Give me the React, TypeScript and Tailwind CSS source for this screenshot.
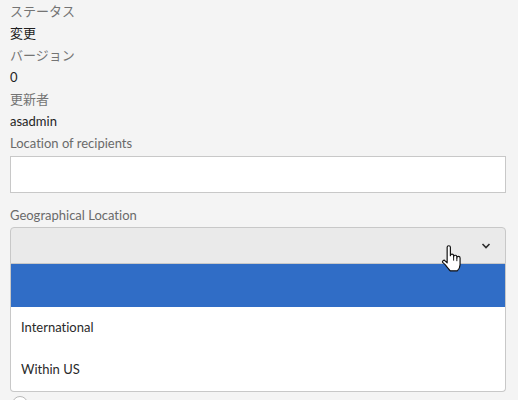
const jp = "font-['Lato','Noto_Sans_CJK_JP',sans-serif] [font-variant-ligatures:none]"

function Field({ label, value }: { label: string; value: string }) {
  return (
    <>
      <div className="h-[22px] text-[13px] leading-[22px] text-[#747474]">{label}</div>
      <div className="h-[22px] text-[13px] leading-[22px] text-[#1f1f1f]">{value}</div>
    </>
  )
}

function HandCursor() {
  return (
    <svg
      width="22"
      height="28"
      viewBox="0 0 20 26"
      className="pointer-events-none absolute left-[441px] top-[245px]"
    >
      <path
        d="M5.5 2.2a1.5 1.5 0 0 1 3 0V10a1.5 1.5 0 0 1 3 0v1a1.5 1.5 0 0 1 3 0v1a1.5 1.5 0 0 1 3 0v6c0 3-1.3 4.8-2.6 6H8.4c-1-1-2.6-3-4.6-5.6L1.6 16.4a1.3 1.3 0 0 1 2-1.7l1.9 1.8Z"
        fill="#fff"
        stroke="#111"
        strokeWidth="1.1"
        strokeLinejoin="round"
      />
      <path d="M11.5 11v3.5M14.5 12v3" stroke="#111" strokeWidth="0.9" fill="none" />
    </svg>
  )
}

export default function App() {
  return (
    <div className={`relative h-[400px] w-[518px] overflow-hidden bg-[#f4f4f4] pl-[10px] pr-[12px] ${jp}`}>
      <Field label="ステータス" value="変更" />
      <Field label="バージョン" value="0" />
      <Field label="更新者" value="asadmin" />

      <div className="h-[22px] text-[13px] leading-[22px] text-[#6a6a6a]">Location of recipients</div>
      <div className="mt-[2px] h-[37px] border border-[#c8c8c8] bg-white" />

      <div className="mt-[11px] h-[22px] text-[13px] leading-[22px] text-[#6a6a6a]">Geographical Location</div>
      <div className="mt-px flex h-[37px] items-center justify-end rounded-t-[4px] border border-[#c8c8c8] bg-[#eaeaea] pr-[14px]">
        <svg width="10" height="6" viewBox="0 0 10 6">
          <path d="M1.5 1l3.5 3.5L8.5 1" fill="none" stroke="#2c2c2c" strokeWidth="1.6" />
        </svg>
      </div>
      <ul className="overflow-hidden rounded-b-[4px] border border-t-0 border-[#c8c8c8] bg-white text-[13px] text-[#2a2a2a]">
        <li className="h-[43px] bg-[#306dc6]" />
        <li className="flex h-[42px] items-center pl-[10px]">International</li>
        <li className="flex h-[42px] items-center pl-[10px]">Within US</li>
      </ul>
      <div className="mt-[4px] ml-[2px] h-[16px] w-[16px] rounded-full border border-[#b8b8b8] bg-white" />

      <HandCursor />
    </div>
  )
}
